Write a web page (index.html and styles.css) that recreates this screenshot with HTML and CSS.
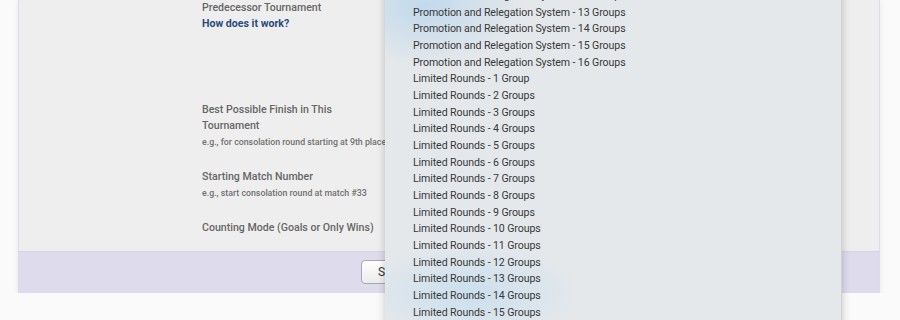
FILE: index.html
```html
<!DOCTYPE html>
<html lang="en">

<head>
    <meta charset="UTF-8">
    <meta name="viewport" content="width=device-width, initial-scale=1.0">
    <title>Tournament Settings</title>
    <link rel="stylesheet" href="styles.css">
</head>

<body>

    <div class="panel">
        <div class="form">
            <div class="form-row row-tall">
                <div class="label">
                    Predecessor Tournament
                    <a href="#" class="help-link">How does it work?</a>
                </div>
                <div class="field"></div>
            </div>

            <div class="form-row">
                <div class="label">
                    Best Possible Finish in This Tournament
                    <span class="hint">e.g., for consolation round starting at 9th place</span>
                </div>
                <div class="field"></div>
            </div>

            <div class="form-row">
                <div class="label">
                    Starting Match Number
                    <span class="hint">e.g., start consolation round at match #33</span>
                </div>
                <div class="field"></div>
            </div>

            <div class="form-row">
                <div class="label">Counting Mode (Goals or Only Wins)</div>
                <div class="field"></div>
            </div>
        </div>

        <div class="panel-footer">
            <button class="save-btn">Save</button>
        </div>
    </div>

    <!-- open select popup -->
    <div class="dropdown">
        <div class="option">Promotion and Relegation System - 12 Groups</div>
        <div class="option">Promotion and Relegation System - 13 Groups</div>
        <div class="option">Promotion and Relegation System - 14 Groups</div>
        <div class="option">Promotion and Relegation System - 15 Groups</div>
        <div class="option">Promotion and Relegation System - 16 Groups</div>
        <div class="option">Limited Rounds - 1 Group</div>
        <div class="option">Limited Rounds - 2 Groups</div>
        <div class="option">Limited Rounds - 3 Groups</div>
        <div class="option">Limited Rounds - 4 Groups</div>
        <div class="option">Limited Rounds - 5 Groups</div>
        <div class="option">Limited Rounds - 6 Groups</div>
        <div class="option">Limited Rounds - 7 Groups</div>
        <div class="option">Limited Rounds - 8 Groups</div>
        <div class="option">Limited Rounds - 9 Groups</div>
        <div class="option">Limited Rounds - 10 Groups</div>
        <div class="option">Limited Rounds - 11 Groups</div>
        <div class="option">Limited Rounds - 12 Groups</div>
        <div class="option">Limited Rounds - 13 Groups</div>
        <div class="option">Limited Rounds - 14 Groups</div>
        <div class="option">Limited Rounds - 15 Groups</div>
        <div class="option">Limited Rounds - 16 Groups</div>
    </div>

</body>

</html>
```

FILE: styles.css
```css
body {
    margin: 0;
    background: #fafafa;
    font-family: Roboto, "Liberation Sans", Arial, sans-serif;
    color: #333;
    overflow: hidden;
}

.panel {
    margin: -1px 20px 0 18px;
    width: 860px;
    background: #eeeeee;
    border: 1px solid #dcdaee;
    box-shadow: 0 2px 6px rgba(0, 0, 0, 0.08);
}

.form {
    padding: 0 0 15px 183px;
}

.form-row {
    display: flex;
    margin-bottom: 18px;
}

.form-row:last-child {
    margin-bottom: 0;
}

.row-tall {
    height: 84px;
}

.label {
    width: 180px;
    font-size: 10.6px;
    line-height: 16px;
    font-weight: 500;
    color: #666;
}

.help-link {
    display: block;
    line-height: 15px;
    font-weight: bold;
    color: #2c4a7e;
    text-decoration: none;
}

.hint {
    display: block;
    white-space: nowrap;
    font-size: 8.8px;
    line-height: 17px;
    font-weight: 500;
    color: #717171;
}

.field {
    flex: 1;
}

.panel-footer {
    height: 40px;
    background: #dedcec;
    border-top: 1px solid #d5d3e6;
    display: flex;
    align-items: center;
    padding-left: 342px;
}

.save-btn {
    height: 24px;
    padding: 0 16px;
    font-family: Roboto, "Liberation Sans", Arial, sans-serif;
    font-size: 12px;
    color: #333;
    background: linear-gradient(#ffffff, #ececec);
    border: 1px solid #a9a9a9;
    border-radius: 4px;
}

.dropdown {
    position: absolute;
    left: 385px;
    top: -12px;
    width: 456px;
    height: 350px;
    background:
        radial-gradient(ellipse 100px 60px at 40px 18px, rgba(192, 216, 236, 0.95), transparent),
        radial-gradient(ellipse 110px 50px at 85px 305px, rgba(200, 222, 238, 0.9), transparent),
        #e4e8eb;
    border-right: 1px solid #cfd2d6;
    box-shadow: 0 0 8px rgba(0, 0, 0, 0.22);
}

.option {
    padding-left: 28px;
    font-size: 10.6px;
    letter-spacing: -0.1px;
    line-height: 16.67px;
    color: #383838;
}
```
